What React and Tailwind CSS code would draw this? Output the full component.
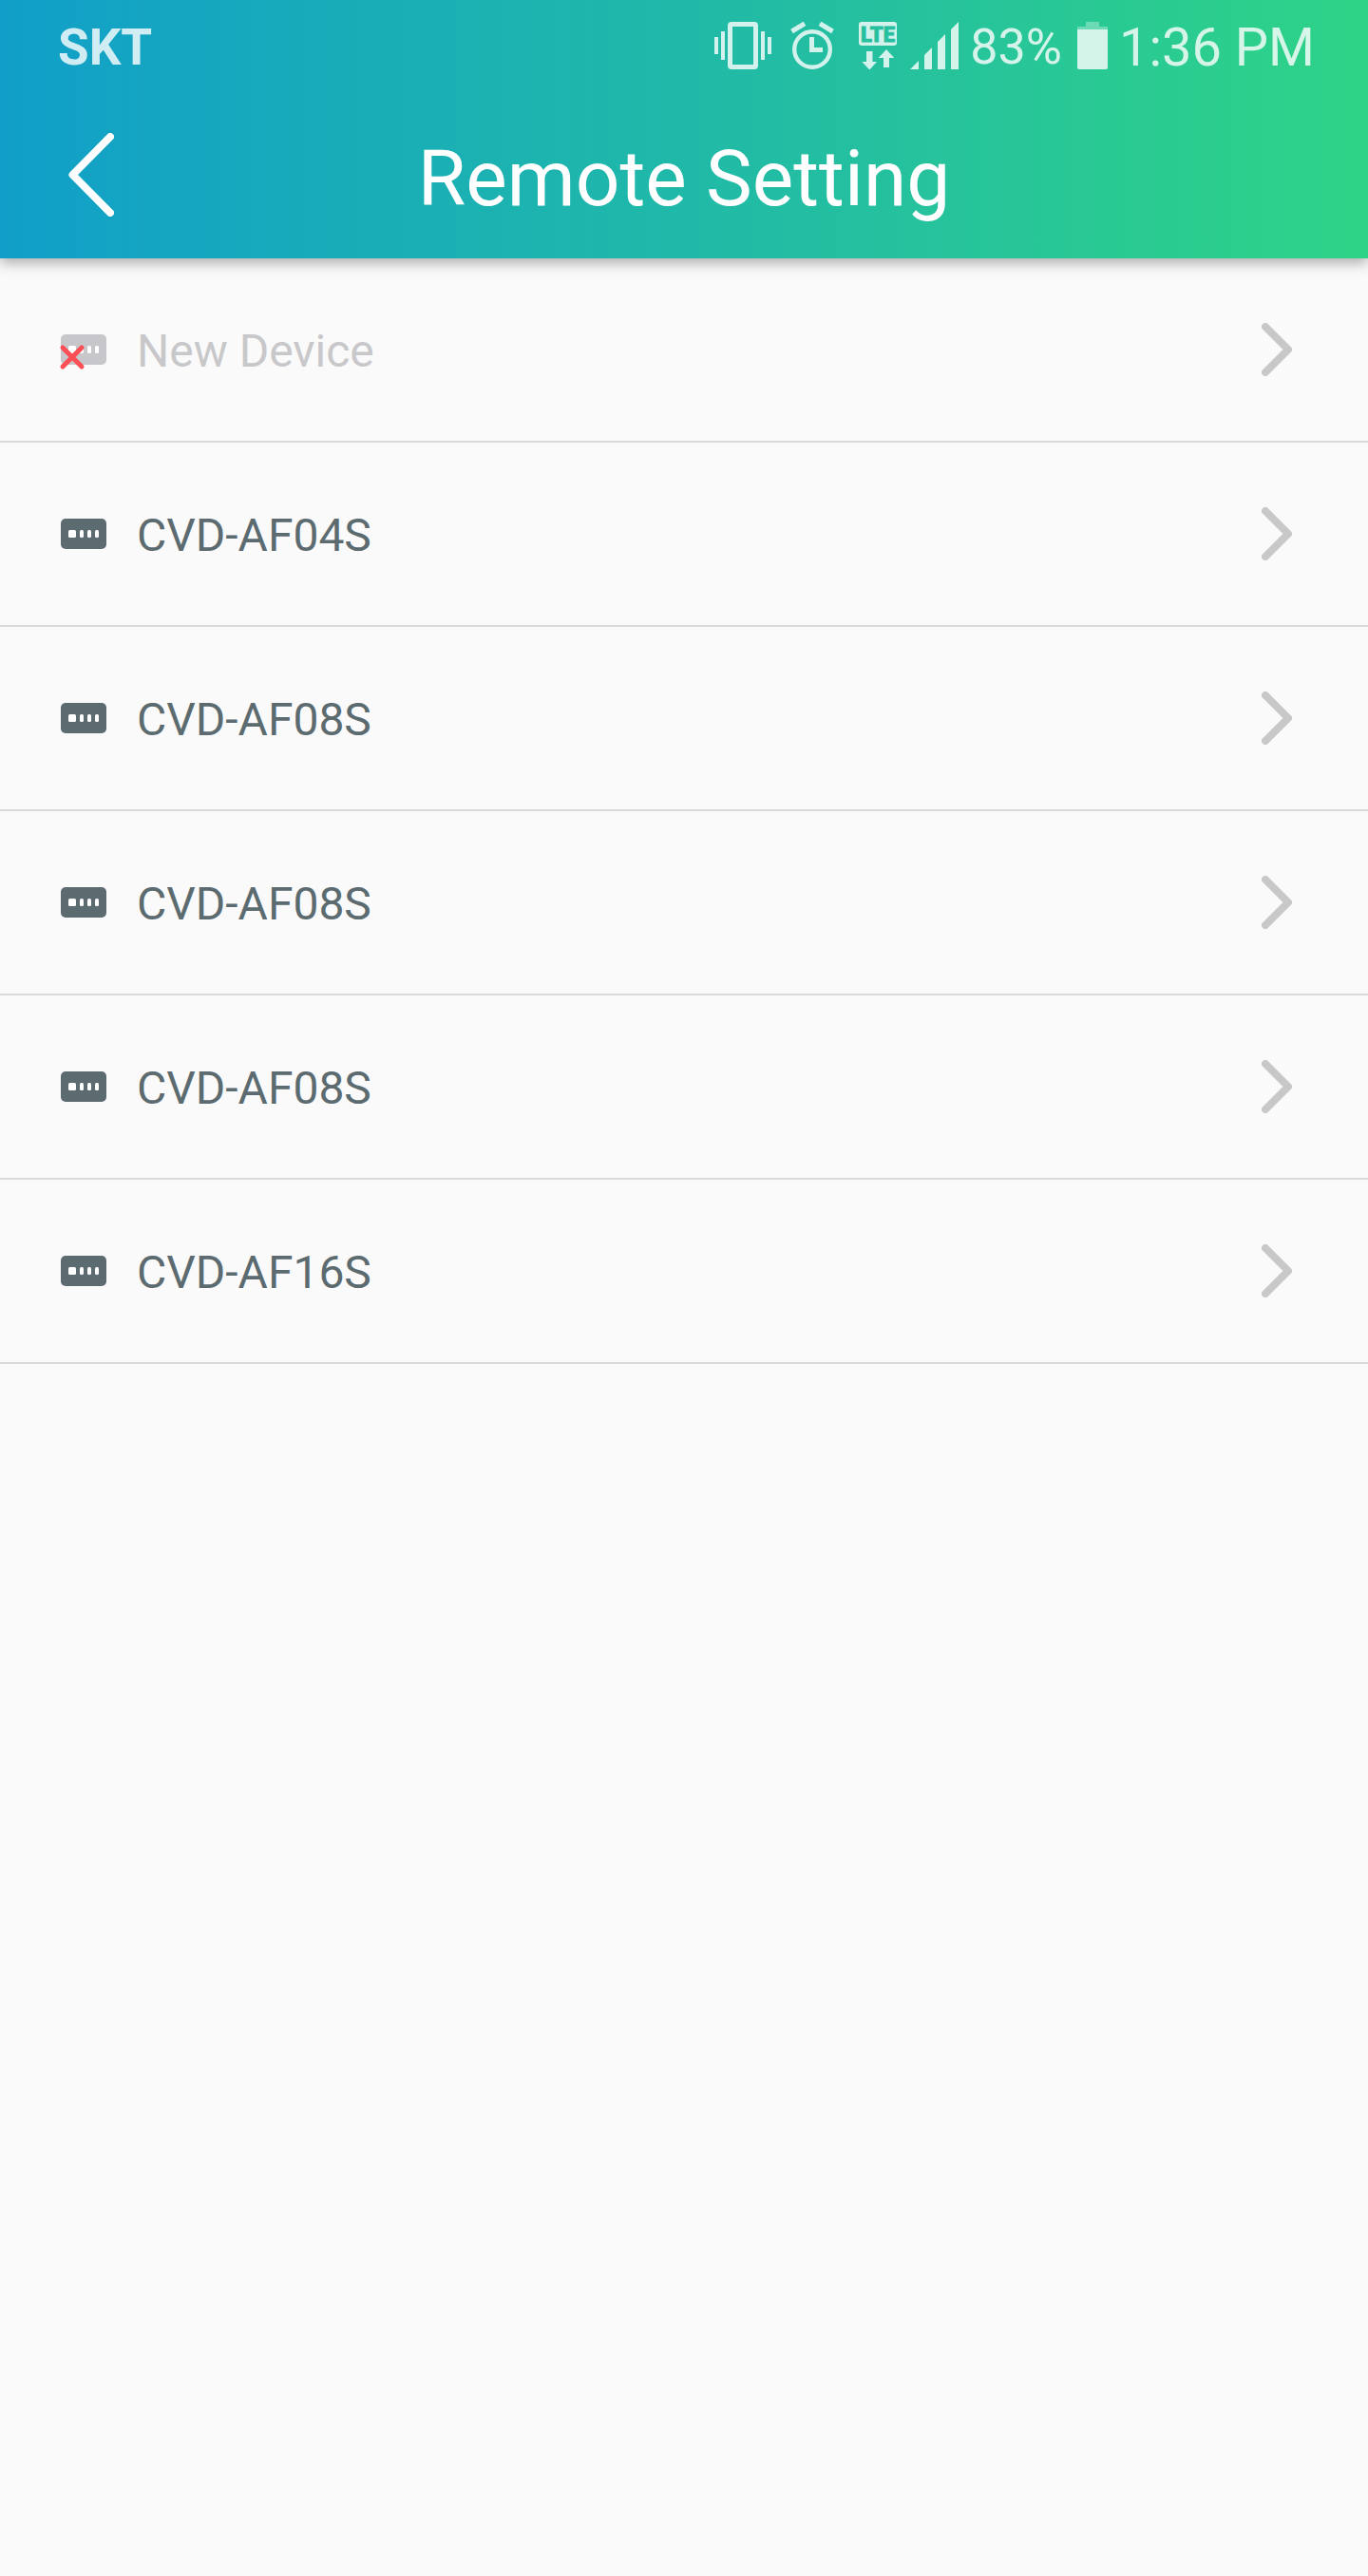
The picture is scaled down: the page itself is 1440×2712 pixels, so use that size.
const devices = [
  { name: "New Device", offline: true },
  { name: "CVD-AF04S" },
  { name: "CVD-AF08S" },
  { name: "CVD-AF08S" },
  { name: "CVD-AF08S" },
  { name: "CVD-AF16S" },
];

function VibrateIcon() {
  return (
    <svg width="60" height="50" viewBox="0 0 60 50" fill="currentColor" aria-hidden="true">
      <rect x="0" y="16" width="4" height="18" />
      <rect x="7" y="10" width="4" height="30" />
      <rect x="16.5" y="2.5" width="27" height="45" rx="1.5" fill="none" stroke="currentColor" strokeWidth="5" />
      <rect x="49" y="10" width="4" height="30" />
      <rect x="56" y="16" width="4" height="18" />
    </svg>
  );
}

function AlarmIcon() {
  return (
    <svg width="46" height="50" viewBox="0 0 46 50" fill="none" stroke="currentColor" aria-hidden="true">
      <circle cx="23" cy="29" r="18.8" strokeWidth="4.4" />
      <path d="M1.5 10 15 1.8M44.5 10 31 1.8" strokeWidth="5" />
      <path d="M22.5 16v13.5H34" strokeWidth="5" />
    </svg>
  );
}

function LteIcon() {
  return (
    <svg width="40" height="50" viewBox="0 0 40 50" fill="currentColor" aria-label="LTE">
      <rect width="40" height="25" rx="3" />
      <text x="20" y="20.5" textAnchor="middle" fontSize="22" fontWeight="900" strokeWidth="0.8" className="fill-[#27c09f] stroke-[#27c09f]">LTE</text>
      <path d="M8 31h6.5v11H19l-7.7 8.5L3.3 42H8zM29 29 37.3 38H32v10h-6V38h-5.3z" />
    </svg>
  );
}

function SignalIcon() {
  return (
    <svg width="51" height="50" viewBox="0 0 51 50" fill="currentColor" aria-hidden="true">
      <path d="M0 50 9 41v9zM15 50V35l8-8v23zM29 50V21l8-8v37zM43 50V8l8-8v50z" />
    </svg>
  );
}

function BatteryIcon() {
  return (
    <svg width="32" height="50" viewBox="0 0 32 50" fill="currentColor" aria-hidden="true">
      <path d="M9 0h14v5h9v3H0V5h9z" opacity="0.4" />
      <path d="M0 8h32v40a2 2 0 0 1-2 2H2a2 2 0 0 1-2-2z" />
    </svg>
  );
}

function DeviceIcon({ offline }) {
  return (
    <svg width="48" height="32" viewBox="0 0 48 32" fill="none" className="shrink-0 overflow-visible" aria-hidden="true">
      <rect width="48" height="32" rx="5" fill={offline ? "#c7c7cb" : "#5c6b70"} />
      <g fill="#fff">
        <rect x="8" y="12" width="8" height="8" rx="1.5" />
        <rect x="20" y="12" width="4" height="8" rx="1.5" />
        <rect x="28" y="12" width="4" height="8" rx="1.5" />
        <rect x="36" y="12" width="4" height="8" rx="1.5" />
      </g>
      {offline && <path d="M2 14 22 34M22 14 2 34" stroke="#fc4f55" strokeWidth="5" strokeLinecap="round" />}
    </svg>
  );
}

export default function App() {
  return (
    <div className="min-h-screen bg-[#fafafa] font-[Roboto,sans-serif]">
      <header className="relative bg-linear-to-r/srgb from-[#119fc9] to-[#2fd387] shadow-[0_4px_14px_rgba(0,0,0,0.35)]">
        <div className="flex h-24 items-center justify-between pr-14 pl-[61px] text-white/80">
          <span className="pt-1 text-[53px] leading-none font-bold">SKT</span>
          <div className="flex items-center">
            <VibrateIcon />
            <span className="ml-5"><AlarmIcon /></span>
            <span className="ml-[26px]"><LteIcon /></span>
            <span className="ml-[14px]"><SignalIcon /></span>
            <span className="ml-3 pt-1 text-[52px] leading-none">83%</span>
            <span className="ml-4"><BatteryIcon /></span>
            <span className="ml-3 pt-1 text-[56px] leading-none">1:36 PM</span>
          </div>
        </div>
        <div className="grid h-44 grid-cols-[1fr_auto_1fr] items-center pt-2">
          <button type="button" aria-label="Back" className="ml-18 w-12 pb-2 text-white">
            <svg width="48" height="88" viewBox="0 0 48 88" fill="none" stroke="currentColor" strokeWidth="8" strokeLinecap="round" strokeLinejoin="round">
              <path d="M44 4 4.5 44l39.5 40" />
            </svg>
          </button>
          <h1 className="text-[82px] leading-none font-normal text-white">Remote Setting</h1>
        </div>
      </header>
      <ul>
        {devices.map((device, i) => (
          <li key={i} className="border-b-2 border-[#dadada]">
            <button type="button" className="flex h-48 w-full items-center gap-8 pr-20 pl-16 text-left">
              <DeviceIcon offline={device.offline} />
              <span className={device.offline ? "flex-1 pt-1 text-5xl text-[#c8c8ca]" : "flex-1 pt-1 text-5xl text-[#5c6b70]"}>
                {device.name}
              </span>
              <svg width="32" height="56" viewBox="0 0 32 56" fill="none" stroke="#c8c8c9" strokeWidth="8" strokeLinecap="round" strokeLinejoin="round" aria-hidden="true">
                <path d="M4 4 28 28 4 52" />
              </svg>
            </button>
          </li>
        ))}
      </ul>
    </div>
  );
}
